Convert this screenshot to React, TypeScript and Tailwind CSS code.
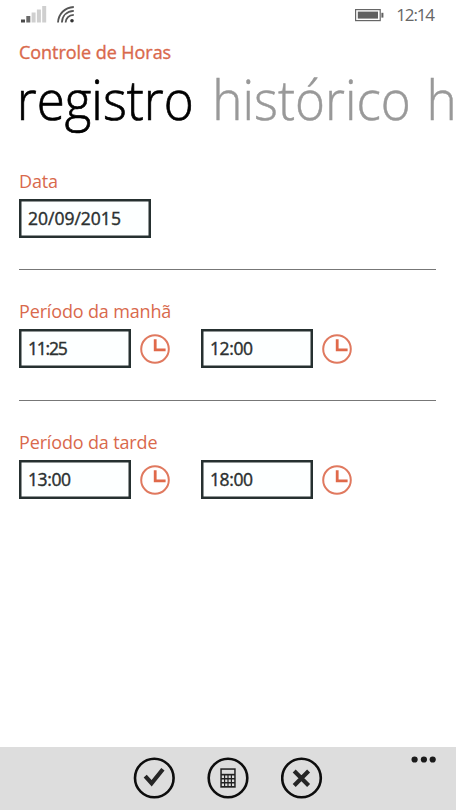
import clsx from "clsx";

function Signal() {
  return (
    <svg width="26" height="17" viewBox="0 0 26 17">
      <rect x="0" y="13.5" width="4" height="3" fill="#4a4a4a" />
      <rect x="5.3" y="10" width="4" height="6.5" fill="#6a6a6a" />
      <rect x="10.6" y="6.5" width="4" height="10" fill="#cfcfcf" />
      <rect x="15.9" y="3.5" width="4" height="13" fill="#cfcfcf" />
      <rect x="21.2" y="0" width="4" height="16.5" fill="#cfcfcf" />
    </svg>
  );
}

function Wifi() {
  return (
    <svg width="18" height="17" viewBox="0 0 18 17" fill="none" stroke="#555" strokeWidth="1.8">
      <path d="M1 16.5C1.5 8 7.5 1.5 16.8 1" />
      <path d="M4.9 16.5C5.3 10 9.5 5.3 16.8 4.9" />
      <path d="M8.6 16.5C9 12.3 11.8 9.1 16.8 8.8" />
      <circle cx="15" cy="14.8" r="1.8" fill="#333" stroke="none" />
    </svg>
  );
}

function Battery() {
  return (
    <svg width="29" height="13" viewBox="0 0 29 13">
      <rect x="0.6" y="0.6" width="24.6" height="11" fill="none" stroke="#666" strokeWidth="1.2" />
      <rect x="2.8" y="2.6" width="20.2" height="7" fill="#606060" />
      <rect x="26.4" y="3.8" width="2" height="4.8" fill="#606060" />
    </svg>
  );
}

function Clock() {
  return (
    <svg width="30" height="30" viewBox="0 0 30 30" fill="none" className="shrink-0">
      <circle cx="15" cy="15" r="13.8" stroke="#e0795f" strokeWidth="2" />
      <path d="M15.2 5.3V15.8H25.6" stroke="#e0694a" strokeWidth="2.8" />
    </svg>
  );
}

function Box({ value, className }: { value: string; className: string }) {
  return (
    <div
      className={clsx(
        "h-[39px] border-2 border-[#263030] bg-[#fdffff] pl-[7px] text-[17.5px] leading-[35px] text-[#2b3030] shadow-[inset_0_0_0_0.5px_#263030] [-webkit-text-stroke:0.4px_#2b3030]",
        className
      )}
    >
      {value}
    </div>
  );
}

function TimeField({ value, className }: { value: string; className?: string }) {
  return (
    <div className="flex items-center gap-[9px]">
      <Box value={value} className={clsx("w-[112px]", className ?? "tracking-[-0.4px]")} />
      <Clock />
    </div>
  );
}

function Label({ children }: { children: string }) {
  return <div className="mb-[6px] h-6 text-[18px] leading-6 tracking-[-0.15px] text-[#d9694c]">{children}</div>;
}

function Divider({ className }: { className: string }) {
  return <hr className={clsx("mr-[1px] border-[#777]", className)} />;
}

function AppBar() {
  return (
    <footer className="relative flex h-[63px] shrink-0 justify-center gap-8 bg-[#dddddd] pt-[10px]">
      <svg width="42" height="42" viewBox="0 0 42 42" fill="none">
        <circle cx="21.3" cy="21" r="19.3" stroke="#0d0d0d" strokeWidth="2.6" />
        <path d="M12.2 19.2L18.6 26.2L29.9 12.2" stroke="#252525" strokeWidth="4.2" />
      </svg>
      <svg width="42" height="42" viewBox="0 0 42 42" fill="none">
        <circle cx="21" cy="21" r="19.3" stroke="#0d0d0d" strokeWidth="2.6" />
        <path d="M13.3 11.3H28.7V30.7H13.3Z" fill="#222" />
        <path d="M14.8 12.8h12.4v4h-12.4z" fill="#dddddd" />
        <path
          d="M14.8 18.6h2.2v2.4h-2.2z M18.2 18.6h2.2v2.4h-2.2z M21.6 18.6h2.2v2.4h-2.2z M25 18.6h2.2v2.4h-2.2z M14.8 22.6h2.2v2.4h-2.2z M18.2 22.6h2.2v2.4h-2.2z M21.6 22.6h2.2v2.4h-2.2z M25 22.6h2.2v2.4h-2.2z M14.8 26.6h2.2v2.4h-2.2z M18.2 26.6h2.2v2.4h-2.2z M21.6 26.6h2.2v2.4h-2.2z M25 26.6h2.2v2.4h-2.2z"
          fill="#dddddd"
        />
      </svg>
      <svg width="42" height="42" viewBox="0 0 42 42" fill="none">
        <circle cx="20.5" cy="21" r="19.3" stroke="#0d0d0d" strokeWidth="2.6" />
        <path d="M13.2 14L27.6 28.4M27.6 14L13.2 28.4" stroke="#252525" strokeWidth="4.2" />
      </svg>
      <svg className="absolute top-[9px] right-[19px]" width="26" height="7" viewBox="0 0 26 7" fill="#1a1a1a">
        <circle cx="3.6" cy="3.5" r="3.1" />
        <circle cx="12.9" cy="3.5" r="3.1" />
        <circle cx="21.7" cy="3.5" r="3.1" />
      </svg>
    </footer>
  );
}

export default function App() {
  return (
    <div className="flex h-screen w-full flex-col overflow-hidden bg-white font-['Open_Sans',sans-serif]">
      <div className="flex h-10 items-start justify-between pr-[22px] pl-[21px]">
        <div className="flex gap-[10px] pt-[6px]">
          <Signal />
          <Wifi />
        </div>
        <div className="flex gap-[12px]">
          <div className="pt-[9px]">
            <Battery />
          </div>
          <span className="h-[30px] text-[17px] leading-[30px] tracking-[-1.1px] text-[#666]">12:14</span>
        </div>
      </div>

      <h1 className="h-6 pl-[19px] text-[18px] leading-6 tracking-[-0.05px] text-[#d9694c] [-webkit-text-stroke:0.35px_#d9694c]">
        Controle de Horas
      </h1>

      <nav className="mt-[5px] flex h-[73px] origin-left scale-x-93 gap-[20px] pl-[18px] text-[55px] leading-[60px] font-light whitespace-nowrap text-[#999]">
        <span className="text-black [-webkit-text-stroke:0.7px_#000]">registro</span>
        <span className="[-webkit-text-stroke:0.5px_#999]">histórico</span>
        <span className="-ml-[3px] [-webkit-text-stroke:0.5px_#999]">h</span>
      </nav>

      <main className="flex-1 px-[19px] pt-[27px]">
        <Label>Data</Label>
        <Box value="20/09/2015" className="w-[132px]" />
        <Divider className="mt-[31px]" />

        <section className="mt-[29px]">
          <Label>Período da manhã</Label>
          <div className="flex gap-[31px]">
            <TimeField value="11:25" className="tracking-[-1.2px]" />
            <TimeField value="12:00" />
          </div>
        </section>
        <Divider className="mt-[32px]" />

        <section className="mt-[29px]">
          <Label>Período da tarde</Label>
          <div className="flex gap-[31px]">
            <TimeField value="13:00" />
            <TimeField value="18:00" />
          </div>
        </section>
      </main>

      <AppBar />
    </div>
  );
}
